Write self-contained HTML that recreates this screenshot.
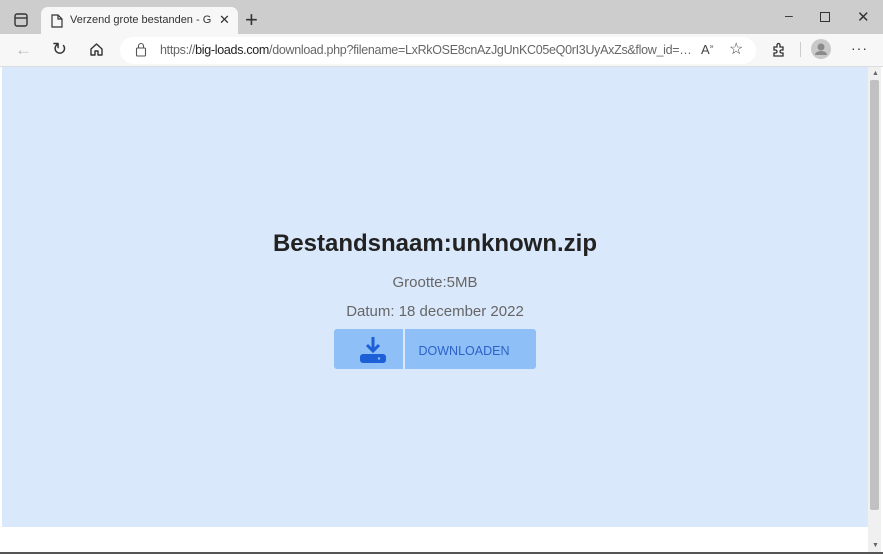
<!DOCTYPE html>
<html><head><meta charset="utf-8"><style>
*{margin:0;padding:0;box-sizing:border-box}
body{width:883px;height:554px;overflow:hidden;background:#fff;font-family:"Liberation Sans",sans-serif;position:relative}
.abs{position:absolute}
#tabs{left:0;top:0;width:883px;height:34px;background:#cdcdcd}
#tab{left:41px;top:7px;width:197px;height:28px;background:#f7f7f7;border-radius:7px 7px 0 0}
#bar{left:0;top:34px;width:883px;height:33px;background:#f7f7f7;border-bottom:1px solid #ddd}
#url{left:120px;top:37px;width:636px;height:27px;background:#fff;border-radius:14px}
#page{left:2px;top:67px;width:866px;height:460px;background:#dae8fb}
#sb{left:868px;top:67px;width:13px;height:485px;background:#f0f0f0}
#thumb{left:870px;top:80px;width:9px;height:430px;background:#c1c1c1;border-radius:2px}
.t{color:#333;font-size:12px;white-space:nowrap;overflow:hidden}
</style></head><body>
<div id="tabs" class="abs"></div>
<svg class="abs" style="left:14px;top:13px" width="14" height="14"><rect x="1" y="1" width="12" height="12" rx="2" fill="none" stroke="#333" stroke-width="1.4"/><line x1="1" y1="5" x2="13" y2="5" stroke="#333" stroke-width="1.4"/></svg>
<div id="tab" class="abs"></div>
<svg class="abs" style="left:51px;top:14px" width="12" height="14"><path d="M1 1h6l4 4v8H1z M7 1v4h4" fill="none" stroke="#333" stroke-width="1.2"/></svg>
<div class="abs t" style="left:70px;top:14px;width:142px;font-size:11px">Verzend grote bestanden - Gratis</div>
<div class="abs" style="left:219px;top:12px;font-size:13px;color:#333">✕</div>
<div class="abs" style="left:245px;top:7px;font-size:22px;color:#333;font-weight:300">+</div>
<div class="abs" style="left:785px;top:7px;font-size:14px;color:#333">–</div>
<div class="abs" style="left:820px;top:12px;width:10px;height:10px;border:1.3px solid #333"></div>
<div class="abs" style="left:857px;top:8px;font-size:15px;color:#333">✕</div>
<div id="bar" class="abs"></div>
<div class="abs" style="left:15px;top:40px;font-size:17px;color:#bbb">←</div>
<div class="abs" style="left:52px;top:39px;font-size:18px;color:#333">↻</div>
<svg class="abs" style="left:89px;top:42px" width="15" height="15"><path d="M2 7L7.5 2L13 7V13H9V9H6V13H2Z" fill="none" stroke="#333" stroke-width="1.4" stroke-linejoin="round"/></svg>
<div id="url" class="abs"></div>
<svg class="abs" style="left:135px;top:42px" width="12" height="15"><rect x="1.5" y="6" width="9" height="8" rx="1" fill="none" stroke="#555" stroke-width="1.1"/><path d="M3.5 6V4a2.5 2.5 0 0 1 5 0v2" fill="none" stroke="#555" stroke-width="1.1"/></svg>
<div class="abs t" style="left:160px;top:43px;width:533px;font-size:12.5px;color:#666;letter-spacing:-0.3px;text-overflow:ellipsis">https://<span style="color:#222">big-loads.com</span>/download.php?filename=LxRkOSE8cnAzJgUnKC05eQ0rI3UyAxZs&amp;flow_id=BBcIdxyz</div>
<div class="abs" style="left:701px;top:42px;font-size:13px;color:#444">A<sup style="font-size:7px">»</sup></div>
<div class="abs" style="left:729px;top:39px;font-size:16px;color:#444">☆</div>
<svg class="abs" style="left:771px;top:42px" width="16" height="16"><path d="M3 5h3V3a1.5 1.5 0 0 1 3 0v2h3v3h-1.5a1.5 1.5 0 0 0 0 3H12v3H3v-3h1.5a1.5 1.5 0 0 0 0-3H3z" fill="none" stroke="#333" stroke-width="1.3"/></svg>
<div class="abs" style="left:800px;top:42px;width:1px;height:15px;background:#ccc"></div>
<svg class="abs" style="left:811px;top:39px" width="20" height="20"><circle cx="10" cy="10" r="10" fill="#c9c9c9"/><circle cx="10" cy="8" r="3.5" fill="#8a8a8a"/><path d="M4 16a6 4 0 0 1 12 0z" fill="#8a8a8a"/></svg>
<div class="abs" style="left:851px;top:40px;font-size:14px;color:#333;letter-spacing:1px">···</div>
<div id="page" class="abs"></div>
<div id="sb" class="abs"></div>
<div id="thumb" class="abs"></div>
<div class="abs" style="left:872px;top:70px;font-size:7px;color:#666">▲</div>
<div class="abs" style="left:872px;top:542px;font-size:7px;color:#666">▼</div>
<div class="abs" style="left:0;top:552px;width:883px;height:2px;background:#555"></div>
<div class="abs" style="left:2px;top:230px;width:866px;text-align:center;font-size:24px;font-weight:bold;color:#222">Bestandsnaam:unknown.zip</div>
<div class="abs" style="left:2px;top:274px;width:866px;text-align:center;font-size:15px;color:#666">Grootte:5MB</div>
<div class="abs" style="left:2px;top:303px;width:866px;text-align:center;font-size:15px;color:#666">Datum: 18 december 2022</div>
<div class="abs" style="left:334px;top:329px;width:69px;height:40px;background:#8fbff7;border-radius:3px 0 0 3px"></div>
<div class="abs" style="left:405px;top:329px;width:131px;height:40px;background:#8fbff7;border-radius:0 3px 3px 0"></div>
<svg class="abs" style="left:359px;top:336px" width="28" height="28"><path d="M14 1V15M8 9L14 15L20 9" fill="none" stroke="#1d5fd6" stroke-width="3"/><rect x="1" y="18" width="26" height="9" rx="3" fill="#1d5fd6"/><circle cx="20" cy="22.5" r="1.2" fill="#8fbff7"/></svg>
<div class="abs" style="left:405px;top:344px;width:118px;text-align:center;font-size:12.5px;color:#2b62c8">DOWNLOADEN</div>
</body></html>
